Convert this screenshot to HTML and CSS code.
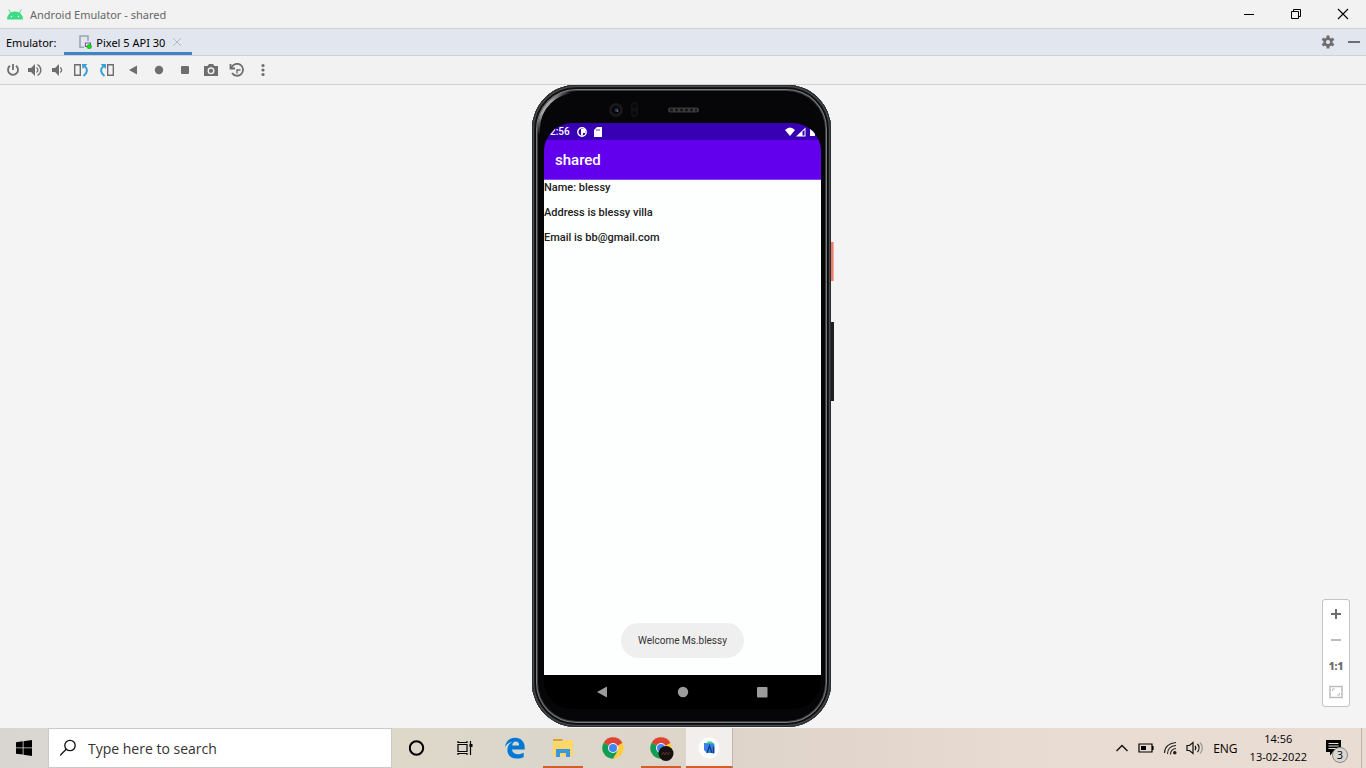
FILE: index.html
```html
<!DOCTYPE html>
<html lang="en">
<head>
<meta charset="utf-8">
<title>Android Emulator - shared</title>
<link rel="stylesheet" href="styles.css">
</head>
<body>
<header class="titlebar">
  <svg class="android" width="18" height="12" viewBox="0 0 18 12"><path d="M1 11.500C1 7 4.500 3.500 9 3.500s8 3.500 8 8z" fill="#3ddc84"/><path d="M4.500 5 2.800 1.500M13.500 5l1.700-3.500" stroke="#3ddc84" stroke-width="1"/><circle cx="5.500" cy="8.500" r=".8" fill="#fff"/><circle cx="12.500" cy="8.500" r=".8" fill="#fff"/></svg>
  <h1 class="window-title">Android Emulator - shared</h1>
  <div class="window-buttons">
    <button class="win-btn" aria-label="Minimize"><svg width="12" height="12"><path d="M1 6.500h10" stroke="#000"/></svg></button>
    <button class="win-btn" aria-label="Restore"><svg width="12" height="12" fill="none" stroke="#000"><path d="M1.500 3.500h7v7h-7zM3.500 3.500v-2h7v7h-2"/></svg></button>
    <button class="win-btn" aria-label="Close"><svg width="12" height="12"><path d="m1 1 10 10M11 1 1 11" stroke="#000" stroke-width="1.100"/></svg></button>
  </div>
</header>
<nav class="tabbar">
  <span class="tabbar-label">Emulator:</span>
  <div class="tab">
    <svg width="13" height="14" viewBox="0 0 13 14"><path d="M5 12.200H1V1h8v5" fill="none" stroke="#9aa7b0" stroke-width="1.600"/><path d="M6.500 8h5v3.500h-5z" fill="#fff" stroke="#7b53a6" stroke-width="1.200"/><circle cx="10.200" cy="11.500" r="2.300" fill="#0be30b" stroke="#188a18" stroke-width=".5"/></svg>
    <span>Pixel 5 API 30</span>
    <button class="tab-close" aria-label="Close tab"><svg width="8" height="8"><path d="m0 0 8 8M8 0 0 8" stroke="#b3b8c2"/></svg></button>
  </div>
  <div class="tabbar-actions">
    <button class="plain" aria-label="Settings"><svg width="14" height="14" viewBox="0 0 14 14"><g stroke="#6e6e6e" stroke-width="3"><path d="M7 .5v13M1.400 3.750l11.200 6.500M1.400 10.250l11.200-6.500"/></g><circle cx="7" cy="7" r="4.600" fill="#6e6e6e"/><circle cx="7" cy="7" r="2.100" fill="#e2e6ee"/></svg></button>
    <button class="plain" aria-label="Hide"><svg width="12" height="14"><path d="M0 7h12" stroke="#6e6e6e" stroke-width="2"/></svg></button>
  </div>
</nav>
<div class="toolbar">
  <button class="tool" aria-label="Power"><svg width="14" height="14" fill="none" stroke="#6e6e6e" stroke-width="1.800"><path d="M7 1v6M4 2.800a5 5 0 1 0 6 0"/></svg></button>
  <button class="tool" aria-label="Volume up"><svg width="14" height="14"><path d="M0 5h3l4-4v12L3 9H0z" fill="#6e6e6e"/><path d="M8.500 4.500c1.800 1.500 1.800 3.500 0 5M9.500 1.500c4.500 3 4.500 8 0 11" fill="none" stroke="#6e6e6e" stroke-width="1.300"/></svg></button>
  <button class="tool" aria-label="Volume down"><svg width="14" height="14"><path d="M2 5h3l4-4v12L5 9H2z" fill="#6e6e6e"/><path d="M10.300 4.500c1.800 1.500 1.800 3.500 0 5" fill="none" stroke="#6e6e6e" stroke-width="1.300"/></svg></button>
  <button class="tool tool-wide" aria-label="Rotate left"><svg width="16" height="14"><path d="M1.700 1.700h5.600v10.600H1.700z" fill="none" stroke="#6e6e6e" stroke-width="1.400"/><path d="M9 1h5.500L9.500 6z" fill="#389fd6"/><path d="M11.500 3c3.500 3 3.300 6.500-1 10" fill="none" stroke="#389fd6" stroke-width="2"/></svg></button>
  <button class="tool tool-wide" aria-label="Rotate right"><svg width="16" height="14"><path d="M8.700 1.700h5.600v10.600H8.700z" fill="none" stroke="#6e6e6e" stroke-width="1.400"/><path d="M1.500 1H7v5z" fill="#389fd6"/><path d="M4.500 3C1 6 1.200 9.500 5.500 13" fill="none" stroke="#389fd6" stroke-width="2"/></svg></button>
  <button class="tool tool-wide" aria-label="Back"><svg width="14" height="14"><path d="M3 7l8-4.500v9z" fill="#6e6e6e"/></svg></button>
  <button class="tool tool-wide" aria-label="Home"><svg width="14" height="14"><circle cx="7" cy="7" r="4.200" fill="#6e6e6e"/></svg></button>
  <button class="tool tool-wide" aria-label="Overview"><svg width="14" height="14"><rect x="3" y="3" width="8" height="8" rx="1" fill="#6e6e6e"/></svg></button>
  <button class="tool tool-wide" aria-label="Take screenshot"><svg width="14" height="14"><path d="M0 3h3.500L5 1h4l1.500 2H14v10H0z" fill="#6e6e6e"/><circle cx="7" cy="7.800" r="2.800" fill="none" stroke="#f2f2f2" stroke-width="1.400"/></svg></button>
  <button class="tool tool-wide" aria-label="Snapshots"><svg width="16" height="14" fill="none" stroke="#6e6e6e" stroke-width="1.800"><path d="M2.500 4.500A6 6 0 1 1 3 10M1.500 1v4.500H6"/><path d="M11.500 7H8v3.500" stroke-width="1.400"/></svg></button>
  <button class="tool tool-wide" aria-label="More"><svg width="14" height="14" fill="#6e6e6e"><circle cx="7" cy="2.500" r="1.600"/><circle cx="7" cy="7" r="1.600"/><circle cx="7" cy="11.500" r="1.600"/></svg></button>
</div>
<main class="stage">
  <div class="device">
    <i class="side power"></i><i class="side volume"></i>
    <div class="phone">
      <div class="bezel">
        <svg width="94" height="18" viewBox="0 0 94 18"><circle cx="10" cy="10" r="7" fill="#19191b"/><circle cx="10" cy="10" r="4.500" fill="#060609" stroke="#1b1b1e"/><circle cx="10.500" cy="10" r="2" fill="#2a3446"/><circle cx="11.500" cy="11" r=".8" fill="#8090a5"/><rect x="25" y="2" width="7" height="15" rx="3.500" fill="#111113"/><circle cx="28.500" cy="6" r="2" fill="#08080a"/><circle cx="28.500" cy="13" r="2" fill="#08080a"/><rect x="62" y="7.500" width="31" height="5" rx="2.500" fill="#3a3a3a"/><path d="M64 10h27" stroke="#191919" stroke-width="2.500" stroke-dasharray="3 2"/></svg>
      </div>
      <div class="screen">
        <div class="status">
          <span>2:56</span>
          <svg width="10" height="10"><circle cx="5" cy="5" r="4.200" fill="none" stroke="#fff" stroke-width="1.400"/><path d="M4 2h4.500v4H6v2.500H4z" fill="#fff"/></svg>
          <svg width="8" height="10"><path d="M3 0h5v10H0V3z" fill="#fff"/><path d="M3 2v2M5 2v2" stroke="#3700b3" stroke-width=".8"/></svg>
          <svg class="signals" width="32" height="10"><path d="M0 3q5-5 10 0L5 9z" fill="#fff"/><path d="M11 9.500l9.500-9v9z" fill="#fff"/><path d="M17.500 4.500 19.500 3v5.500h-2z" fill="#3700b3"/><path d="M25 1h3.500l1.500 4v4h-5z" fill="#fff"/></svg>
        </div>
        <div class="appbar">shared</div>
        <div class="content">
          <p class="line">Name: blessy</p>
          <p class="line">Address is blessy villa</p>
          <p class="line">Email is bb@gmail.com</p>
          <div class="toast" role="status">Welcome Ms.blessy</div>
        </div>
        <div class="navbar">
          <button class="plain" aria-label="Back"><svg width="12" height="12"><path d="M0 6l10-5.500v11z" fill="#9c9c9c"/></svg></button>
          <button class="plain" aria-label="Home"><svg width="12" height="12"><circle cx="6" cy="6" r="5.200" fill="#9c9c9c"/></svg></button>
          <button class="plain" aria-label="Recents"><svg width="12" height="12"><rect x="0" y="1" width="10.500" height="10.500" rx="1" fill="#9c9c9c"/></svg></button>
        </div>
      </div>
    </div>
  </div>
  <div class="zoombox">
    <button class="plain" aria-label="Zoom in"><svg width="14" height="14"><path d="M2 7h10M7 2v10" stroke="#6e6e6e" stroke-width="2"/></svg></button>
    <button class="plain" aria-label="Zoom out"><svg width="14" height="14"><path d="M2 7h10" stroke="#bdbdbd" stroke-width="2"/></svg></button>
    <button class="plain ratio">1:1</button>
    <button class="plain" aria-label="Fit"><svg width="14" height="14" fill="none" stroke="#bdbdbd"><path d="M1 1.500h12v11H1z" stroke-width="1.500"/><path d="M3.500 6V4H6M10.500 8v2H8"/></svg></button>
  </div>
</main>
<footer class="taskbar">
  <button class="task start" aria-label="Start"><svg width="16" height="16"><path d="M0 2.300 6.700 1.300v6.200H0zM7.500 1.200 16 0v7.500H7.500zM0 8.300h6.700v6.300L0 13.700zM7.500 8.300H16V16l-8.500-1.300z"/></svg></button>
  <label class="search">
    <svg width="18" height="18" fill="none" stroke="#111" stroke-width="1.300"><circle cx="10" cy="6.500" r="5.200"/><path d="M6.200 10.300 0 16.500"/></svg>
    <input class="search-input" type="text" placeholder="Type here to search" aria-label="Type here to search">
  </label>
  <button class="task" aria-label="Cortana"><svg width="16" height="16"><circle cx="7.500" cy="8" r="6.700" fill="none" stroke="#000" stroke-width="2"/></svg></button>
  <button class="task" aria-label="Task View"><svg width="18" height="16" fill="none" stroke="#000" stroke-width="1.200"><path d="M1 4.500h9v7H1zM1 1v1.500h9V1M1 15v-1.500h9V15M13.500 1v14"/><path d="M12.500 5.500h3" stroke-width="3"/></svg></button>
  <button class="task" aria-label="Edge"><svg width="22" height="22" viewBox="0 0 22 22"><path d="M1 10C2 4 6 .8 11 .8c6 0 9.700 4.200 9.700 9.500v2.200H8c.2 3.200 3 4.700 6.200 4.700 2 0 4-.6 5.500-1.500v4.300c-2 1-4.200 1.500-6.700 1.500-6 0-9.600-3.300-9.600-8.500 0-3.700 2-6.700 5.200-8.200C5.500 5.400 3 6.700 1 10zm7.200-1.400h6.900c0-2.600-1.200-4-3.300-4-2 0-3.300 1.600-3.600 4z" fill="#0078d7"/></svg></button>
  <button class="task running" aria-label="File Explorer"><svg width="22" height="20"><path d="M1 1h9l1 2H1z" fill="#e5a50a"/><path d="M1 4h10l1-2h9v16H1z" fill="#ffd768"/><path d="M4 19v-8h14v8h-4v-4H8v4z" fill="#3a96dd"/></svg></button>
  <button class="task" aria-label="Chrome"><svg width="22" height="22" viewBox="0 0 22 22"><circle cx="11" cy="11" r="10.700" fill="#ffcd40"/><path d="M11 11 1.730 5.650A10.700 10.700 0 0 1 20.270 5.650z" fill="#db4437"/><path d="M11 5.650h9.300L11 11z" fill="#db4437"/><path d="M11 11 1.730 5.650A10.700 10.700 0 0 0 11 21.700l4.600-8z" fill="#0f9d58"/><circle cx="11" cy="11" r="5" fill="#f5f5f5"/><circle cx="11" cy="11" r="4" fill="#4285f4"/></svg></button>
  <button class="task running" aria-label="Chrome profile"><svg width="26" height="26" viewBox="-2 -2 26 26"><circle cx="11" cy="11" r="10.700" fill="#ffcd40"/><path d="M11 11 1.730 5.650A10.700 10.700 0 0 1 20.270 5.650z" fill="#db4437"/><path d="M11 5.650h9.300L11 11z" fill="#db4437"/><path d="M11 11 1.730 5.650A10.700 10.700 0 0 0 11 21.700l4.600-8z" fill="#0f9d58"/><circle cx="11" cy="11" r="5" fill="#f5f5f5"/><circle cx="11" cy="11" r="4" fill="#4285f4"/><circle cx="16" cy="16.500" r="7.500" fill="#15110f"/><path d="M11.500 18l2-3 1 3 2-3 1.500 3 2-3" fill="none" stroke="#5a3f20" stroke-width=".8"/></svg></button>
  <button class="task running active" aria-label="Android Emulator"><svg width="22" height="22"><circle cx="11" cy="11" r="10.500" fill="#fff"/><path d="M6 6h8.500a2 2 0 0 1 2 2v8H9l-3-3z" fill="#3b82f0"/><path d="M8 6.500a4 3.500 0 0 1 7.500 0z" fill="#3ddc84"/><path d="M9 16l2.500-7 2.500 7M15.500 9.500v7" stroke="#0b3f78" stroke-width="1.300" fill="none"/></svg></button>
  <div class="tray">
    <button class="plain" aria-label="Show hidden icons"><svg width="14" height="14"><path d="M1.500 10 7 4.500l5.500 5.500" fill="none" stroke="#111" stroke-width="1.400"/></svg></button>
    <svg width="16" height="14"><path d="M1 3h13v8H1zM15 5v4" fill="none" stroke="#000" stroke-width="1.200"/><path d="M3 5h5v4H3z"/></svg>
    <svg width="14" height="16" fill="none" stroke="#222" stroke-width="1.100"><path d="M1.500 13C1.500 7 6 3 13 2.500M4.500 14c0-5 3-8 8.500-8.500M7.500 14.500C7.500 11 9.500 9 13 8.500"/><circle cx="11.800" cy="12.800" r="1.200" fill="#111"/></svg>
    <svg width="18" height="14" fill="none" stroke="#111" stroke-width="1.200"><path d="M1 4.500h2.500L7 1.500v11L3.500 9.500H1zM9 5c1 1.200 1 2.800 0 4M11.500 3c2 2.300 2 5.700 0 8"/><path d="M14 1.500c3 3.500 3 7.500 0 11" stroke="#999"/></svg>
    <span class="lang">ENG</span>
    <time class="clock" datetime="2022-02-13T14:56"><span>14:56</span><span>13-02-2022</span></time>
    <button class="plain notif" aria-label="3 notifications"><svg width="18" height="18"><path d="M1 1h15v12H8l-3 3.500V13H1z"/><path d="M3.500 4.500h10M3.500 7h10M3.500 9.500h10" stroke="#e9dcd3"/></svg><span class="badge">3</span></button>
  </div>
</footer>
</body>
</html>
```

FILE: styles.css
```css
* { box-sizing: border-box; }
body {
  margin: 0;
  height: 100vh;
  display: flex;
  flex-direction: column;
  overflow: hidden;
  background: #f4f4f4;
  font-family: "Open Sans", "Noto Sans", sans-serif;
  font-size: 12px;
  color: #000;
}
button { margin: 0; padding: 0; border: 0; background: none; font: inherit; color: inherit; }
svg { display: block; flex: none; }
.plain, .tool, .task, .win-btn, .tab-close { display: flex; align-items: center; justify-content: center; }

.titlebar {
  height: 29px;
  display: flex;
  align-items: center;
  padding-left: 6px;
  gap: 6px;
  background: #f2f2f2;
  border-bottom: 1px solid #d1d1d1;
}
.window-title { margin: 0; font-family: "Noto Sans", sans-serif; font-size: 11px; font-weight: 400; color: #666; }
.window-buttons { display: flex; margin-left: auto; }
.win-btn { width: 47px; height: 28px; }

.tabbar {
  height: 27px;
  display: flex;
  align-items: center;
  padding: 0 6px;
  gap: 8px;
  background: #e2e6ee;
  border-bottom: 1px solid #d1d1d1;
  font-family: "Noto Sans", "Open Sans", sans-serif;
  font-size: 11px;
}
.tab {
  align-self: stretch;
  display: flex;
  align-items: center;
  padding: 3px 11px 0 15px;
  gap: 4px;
  border-bottom: 3px solid #4083c9;
}
.tab-close { padding-left: 4px; }
.tabbar-actions { display: flex; margin-left: auto; gap: 13px; }

.toolbar {
  height: 29px;
  display: flex;
  align-items: center;
  padding-left: 2px;
  background: #f2f2f2;
  border-bottom: 1px solid #d1d1d1;
}
.tool { width: 22px; height: 22px; }
.tool-wide { width: 26px; }

.stage { flex: 1; position: relative; display: flex; justify-content: center; align-items: flex-start; }
.device { position: relative; width: 302px; height: 100%; padding: 0 3px 1px 0; }
.side { position: absolute; right: 0; width: 5px; }
.power { top: 157px; height: 39px; background: #f47c66; border-right: 1px solid #e4b5ac; }
.volume { top: 237px; height: 79px; background: #1e1f20; }
.phone {
  position: relative;
  height: 100%;
  display: flex;
  flex-direction: column;
  padding: 0 10px 18px 12px;
  border-radius: 44px;
  background: #060608;
  box-shadow:
    inset 0 0 0 1px #2c2e2f,
    inset 0 0 0 2px #4b4e50,
    inset 0 0 0 3px #17181a,
    inset 0 0 0 4px #0b0b0c,
    inset 0 0 0 5px #77797b,
    inset 0 0 0 6px #3c3d3f;
}
/* light falling on the rim's upper left corner */
.phone::before {
  content: "";
  position: absolute;
  inset: 5px;
  border: 3px solid #a3a5a6;
  border-radius: 39px;
  -webkit-mask-image: radial-gradient(circle at 8px 16px, #000 8px, transparent 30px);
  mask-image: radial-gradient(circle at 8px 16px, #000 8px, transparent 30px);
}
.bezel { height: 38px; display: flex; justify-content: center; padding: 15px 0 0 0; margin-right: 60px; }
.screen { flex: 1; display: flex; flex-direction: column; overflow: hidden; border-radius: 28px; background: #000; font-family: Roboto, sans-serif; }
.status {
  height: 17px;
  display: flex;
  align-items: center;
  gap: 7px;
  padding: 0 4px 0 6px;
  background: #3700b3;
  color: #fff;
  font-size: 10px;
  font-weight: 500;
}
.signals { margin-left: auto; }
.appbar {
  height: 40px;
  display: flex;
  align-items: center;
  padding-left: 11px;
  background: #6200ee;
  border-bottom: 1px solid #8a45f0;
  color: #fff;
  font-size: 15px;
  font-weight: 500;
}
.content { flex: 1; display: flex; flex-direction: column; background: #fdfefe; }
.line { margin: 0 0 9px; font-size: 11px; line-height: 16px; font-weight: 500; color: #222; }
.toast {
  margin: auto auto 17px;
  padding: 0 17px;
  border-radius: 18px;
  background: #efefef;
  color: #333;
  font-size: 10px;
  line-height: 35px;
}
.navbar { height: 34px; display: flex; align-items: center; justify-content: center; gap: 68px; }

.zoombox {
  position: absolute;
  right: 16px;
  bottom: 21px;
  width: 28px;
  padding: 1px 0;
  display: flex;
  flex-direction: column;
  background: #fff;
  border: 1px solid #c4c4c4;
  border-radius: 3px;
}
.zoombox .plain { height: 26px; }
.ratio { font-size: 10px; font-weight: 800; color: #6e6e6e; }

.taskbar {
  height: 40px;
  display: flex;
  align-items: stretch;
  background: linear-gradient(90deg, #d9d6d2 0, #ddd8c8 29%, #dbd6cb 40%, #dfd4ca 54%, #e8dbd1 75%, #e9dcd3 100%);
}
.task { width: 49px; border-bottom: 2px solid transparent; padding-top: 2px; }
.start { width: 48px; }
.search {
  width: 344px;
  display: flex;
  align-items: center;
  gap: 10px;
  padding: 0 11px;
  background: #fff;
  border: 1px solid #c9c9c9;
}
.search-input { flex: 1; min-width: 0; padding: 0; border: 0; outline: 0; background: none; font: 14px "Open Sans", sans-serif; color: #333; }
.search-input::placeholder { color: #333; opacity: 1; }
.running { width: 40px; margin: 0 5px 0 4px; border-bottom-color: #d0602c; }
.active { width: 47px; margin: 0; background: #f1eeeb; border-right: 1px solid #bfb8b0; }
.tray { display: flex; align-items: center; margin-left: auto; margin-right: 4px; padding-right: 18px; gap: 9px; border-right: 1px solid #bdb4ae; }
.lang { font-size: 12px; }
.clock { display: flex; flex-direction: column; align-items: center; margin: 0 9px 0 3px; font-size: 11px; line-height: 18px; }
.notif { position: relative; }
.badge {
  position: absolute;
  left: 7px;
  top: 8px;
  width: 16px;
  height: 16px;
  border: 1px solid #888;
  border-radius: 50%;
  background: #d9d6d3;
  font-size: 11px;
  line-height: 14px;
}
```
